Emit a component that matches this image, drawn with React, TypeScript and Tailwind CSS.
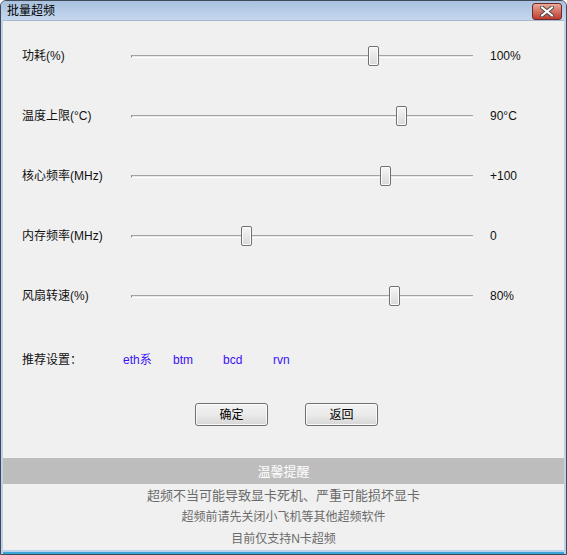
import React from 'react';

const FONT = '"Liberation Sans", "Noto Sans CJK SC", sans-serif';

interface SliderRow {
  label: string;
  value: string;
  thumb: number; // thumb left offset inside the track, px
}

const rows: SliderRow[] = [
  { label: '功耗(%)', value: '100%', thumb: 237 },
  { label: '温度上限(°C)', value: '90°C', thumb: 265 },
  { label: '核心频率(MHz)', value: '+100', thumb: 249 },
  { label: '内存频率(MHz)', value: '0', thumb: 110 },
  { label: '风扇转速(%)', value: '80%', thumb: 258 },
];

const presets = ['eth系', 'btm', 'bcd', 'rvn'];

const tips = ['超频不当可能导致显卡死机、严重可能损坏显卡', '超频前请先关闭小飞机等其他超频软件', '目前仅支持N卡超频'];

const Track = ({ thumb }: { thumb: number }) => (
  <div className="relative w-[342px] h-[20px]">
    {/* groove */}
    <div className="absolute left-0 right-0 top-[9px] h-[3px] border-t border-[#a3a3a3] border-l border-l-[#8a8a8a] bg-[#e6e6e6] border-b border-b-white" />
    {/* thumb */}
    <div
      className="absolute top-0 w-[11px] h-[20px] rounded-[2px] border border-[#707070] bg-gradient-to-b from-[#f6f6f6] to-[#d9d9d9] shadow-[inset_0_0_0_1px_#fcfcfc]"
      style={{ left: thumb }}
    />
  </div>
);

const Button = ({ children }: { children: React.ReactNode }) => (
  <button className="w-[73px] h-[23px] rounded-[3px] border border-[#707070] bg-gradient-to-b from-[#f2f2f2] via-[#ebebeb] to-[#d6d6d6] text-[12px] text-black shadow-[inset_0_0_0_1px_#fbfbfb] flex items-center justify-center">
    {children}
  </button>
);

export default function App() {
  return (
    <div
      className="w-[567px] h-[555px] flex flex-col border border-[#3f4a58] rounded-t-[6px] bg-[#bcd2ea] overflow-hidden"
      style={{ fontFamily: FONT }}
    >
      {/* Title bar */}
      <div className="h-[23px] flex items-center justify-between pl-[6px] pr-[4px] bg-gradient-to-b from-[#a9c1df] to-[#c4d7ee]">
        <span className="text-[12px] text-black pt-[1px]">批量超频</span>
        <div className="w-[30px] h-[17px] mt-[2px] rounded-[3px] border border-[#6e2b2a] bg-gradient-to-b from-[#e9a998] via-[#d47162] to-[#c0392e] flex items-center justify-center">
          <svg width="14" height="11" viewBox="0 0 14 11">
            <path d="M2 1.5 L12 9.5 M12 1.5 L2 9.5" stroke="#4a4a4a" strokeWidth="4" strokeLinecap="round" />
            <path d="M2 1.5 L12 9.5 M12 1.5 L2 9.5" stroke="#ffffff" strokeWidth="2.2" strokeLinecap="round" />
          </svg>
        </div>
      </div>

      {/* Client area */}
      <div className="flex-1 mx-[2px] mb-[2px] bg-[#f0f0f0] border-t border-[#a5b8cf] flex flex-col text-[12px] text-[#111]">
        <div className="pt-[5px] flex flex-col">
          {rows.map((r) => (
            <div key={r.label} className="h-[60px] flex items-center">
              <span className="w-[109px] pl-[19px] shrink-0 box-content">{r.label}</span>
              <Track thumb={r.thumb} />
              <span className="ml-[17px]">{r.value}</span>
            </div>
          ))}
        </div>

        <div className="mt-[24px] h-[20px] flex items-center">
          <span className="w-[101px] pl-[19px] shrink-0 box-content">推荐设置：</span>
          {presets.map((p) => (
            <span key={p} className="w-[50px] text-[#3b10f5] cursor-pointer">
              {p}
            </span>
          ))}
        </div>

        <div className="mt-[33px] flex gap-[37px] pl-[192px]">
          <Button>确定</Button>
          <Button>返回</Button>
        </div>

        <div className="mt-[32px] h-[26px] bg-[#bdbdbd] text-white text-[13px] flex items-center justify-center">
          温馨提醒
        </div>
        <div className="flex flex-col text-[#6b6b6b] text-[12px]">
          {tips.map((t, i) => (
            <div
              key={t}
              className={`h-[22px] ${i === 0 ? 'text-[13px]' : ''} flex items-center justify-center`}
            >
              {t}
            </div>
          ))}
        </div>
      </div>
      <div className="h-[2px] mx-[2px] bg-[#3aa6d8]" />
    </div>
  );
}
